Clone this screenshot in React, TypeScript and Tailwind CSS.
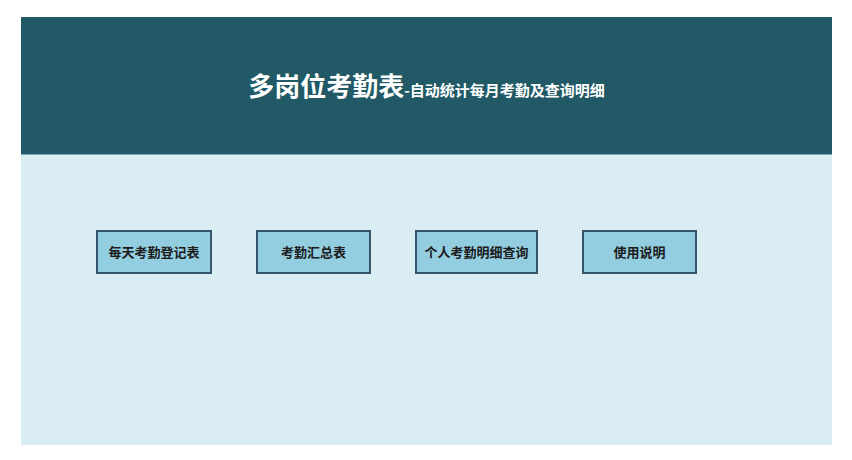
const buttons = ['每天考勤登记表', '考勤汇总表', '个人考勤明细查询', '使用说明'];
const widths = ['w-[116px]', 'w-[115px]', 'w-[123px]', 'w-[115px]'];

export default function App() {
  return (
    <div
      className="w-[852px] h-[460px] bg-white pt-[17px] pl-[21px]"
      style={{ fontFamily: '"Noto Sans CJK SC", "Noto Sans", sans-serif' }}
    >
      <div className="w-[811px] h-[428px] flex flex-col bg-[#daedf3]">
        {/* Header */}
        <div className="h-[138px] shrink-0 bg-[#215a66] border-b border-[#7fa8b4] flex items-center justify-center pb-[2px]">
          <h1 className="flex items-baseline text-white font-bold">
            <span className="text-[26px] leading-none">多岗位考勤表</span>
            <span className="text-[15px] leading-none">-自动统计每月考勤及查询明细</span>
          </h1>
        </div>

        {/* Menu buttons */}
        <div className="flex gap-[44px] pl-[75px] pt-[75px]">
          {buttons.map((label, i) => (
            <button
              key={label}
              className={`${widths[i]} h-[44px] bg-[#93cde0] border-2 border-[#35576e] text-[13px] font-bold text-[#1c1c1c] flex items-center justify-center`}
            >
              {label}
            </button>
          ))}
        </div>
      </div>
    </div>
  );
}
